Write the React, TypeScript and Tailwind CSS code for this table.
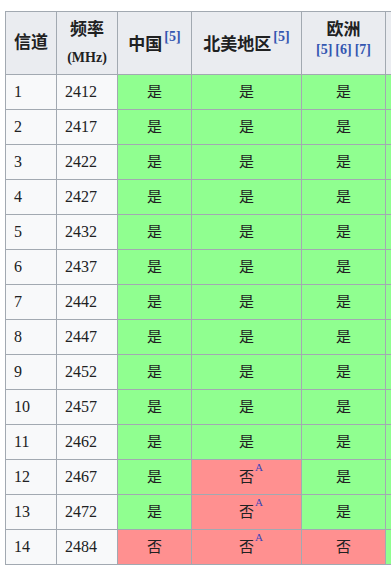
import React from "react";

const Y = "y";
const N = "n";

const rows: { ch: string; f: string; cn: string; na: string; eu: string }[] = [
  { ch: "1", f: "2412", cn: Y, na: Y, eu: Y },
  { ch: "2", f: "2417", cn: Y, na: Y, eu: Y },
  { ch: "3", f: "2422", cn: Y, na: Y, eu: Y },
  { ch: "4", f: "2427", cn: Y, na: Y, eu: Y },
  { ch: "5", f: "2432", cn: Y, na: Y, eu: Y },
  { ch: "6", f: "2437", cn: Y, na: Y, eu: Y },
  { ch: "7", f: "2442", cn: Y, na: Y, eu: Y },
  { ch: "8", f: "2447", cn: Y, na: Y, eu: Y },
  { ch: "9", f: "2452", cn: Y, na: Y, eu: Y },
  { ch: "10", f: "2457", cn: Y, na: Y, eu: Y },
  { ch: "11", f: "2462", cn: Y, na: Y, eu: Y },
  { ch: "12", f: "2467", cn: Y, na: "nA", eu: Y },
  { ch: "13", f: "2472", cn: Y, na: "nA", eu: Y },
  { ch: "14", f: "2484", cn: N, na: "nA", eu: N },
];

const font = { fontFamily: "'Liberation Serif', 'Noto Sans CJK SC', serif" };

function Cell({ v }: { v: string }) {
  const yes = v === Y;
  return (
    <div
      className={
        "flex items-center justify-center text-[15px] text-[#202122] " +
        (yes ? "bg-[#90ff90]" : "bg-[#ff9090]")
      }
    >
      <span className="relative">
        {yes ? "是" : "否"}
        {v === "nA" && (
          <span className="absolute left-full top-[-4px] ml-px text-[11px] leading-none text-[#3b44b8]">
            A
          </span>
        )}
      </span>
    </div>
  );
}

function Ref({ n }: { n: string }) {
  return <span className="text-[#3356b0]">[{n}]</span>;
}

export default function App() {
  return (
    <div className="bg-white w-[391px] h-[574px] overflow-hidden pt-[11px] pl-[5px]" style={font}>
      <div className="w-[386px] overflow-hidden">
        <div className="grid w-max grid-cols-[50px_60px_73px_109px_83px_80px] grid-rows-[62px] auto-rows-[34px] gap-px p-px bg-[#a2a9b1] text-[#202122]">
          <div className="bg-[#eaecf0] flex items-center justify-center font-bold text-[17px]">信道</div>
          <div className="bg-[#eaecf0] flex flex-col items-center justify-center font-bold pt-[2px]">
            <span className="text-[17px] leading-[28px]">频率</span>
            <span className="text-[14px] leading-[28px]">(MHz)</span>
          </div>
          <div className="bg-[#eaecf0] flex items-center justify-center font-bold text-[17px] pt-[3px]">
            <span>中国</span>
            <span className="text-[14px] relative top-[-8px] ml-[2px]">
              <Ref n="5" />
            </span>
          </div>
          <div className="bg-[#eaecf0] flex items-center justify-center font-bold text-[17px] pt-[3px]">
            <span>北美地区</span>
            <span className="text-[14px] relative top-[-8px] ml-[2px]">
              <Ref n="5" />
            </span>
          </div>
          <div className="bg-[#eaecf0] flex flex-col items-center justify-center font-bold pb-[6px]">
            <span className="text-[17px] leading-[20px]">欧洲</span>
            <span className="text-[14px] leading-[20px] flex gap-[3px]">
              <Ref n="5" />
              <Ref n="6" />
              <Ref n="7" />
            </span>
          </div>
          <div className="bg-[#eaecf0]"></div>
          {rows.map((r) => (
            <React.Fragment key={r.ch}>
              <div className="bg-[#f8f9fa] flex items-center pl-[8px] text-[16px]">{r.ch}</div>
              <div className="bg-[#f8f9fa] flex items-center pl-[8px] text-[16px]">{r.f}</div>
              <Cell v={r.cn} />
              <Cell v={r.na} />
              <Cell v={r.eu} />
              <div className="bg-[#90ff90]"></div>
            </React.Fragment>
          ))}
        </div>
      </div>
    </div>
  );
}
